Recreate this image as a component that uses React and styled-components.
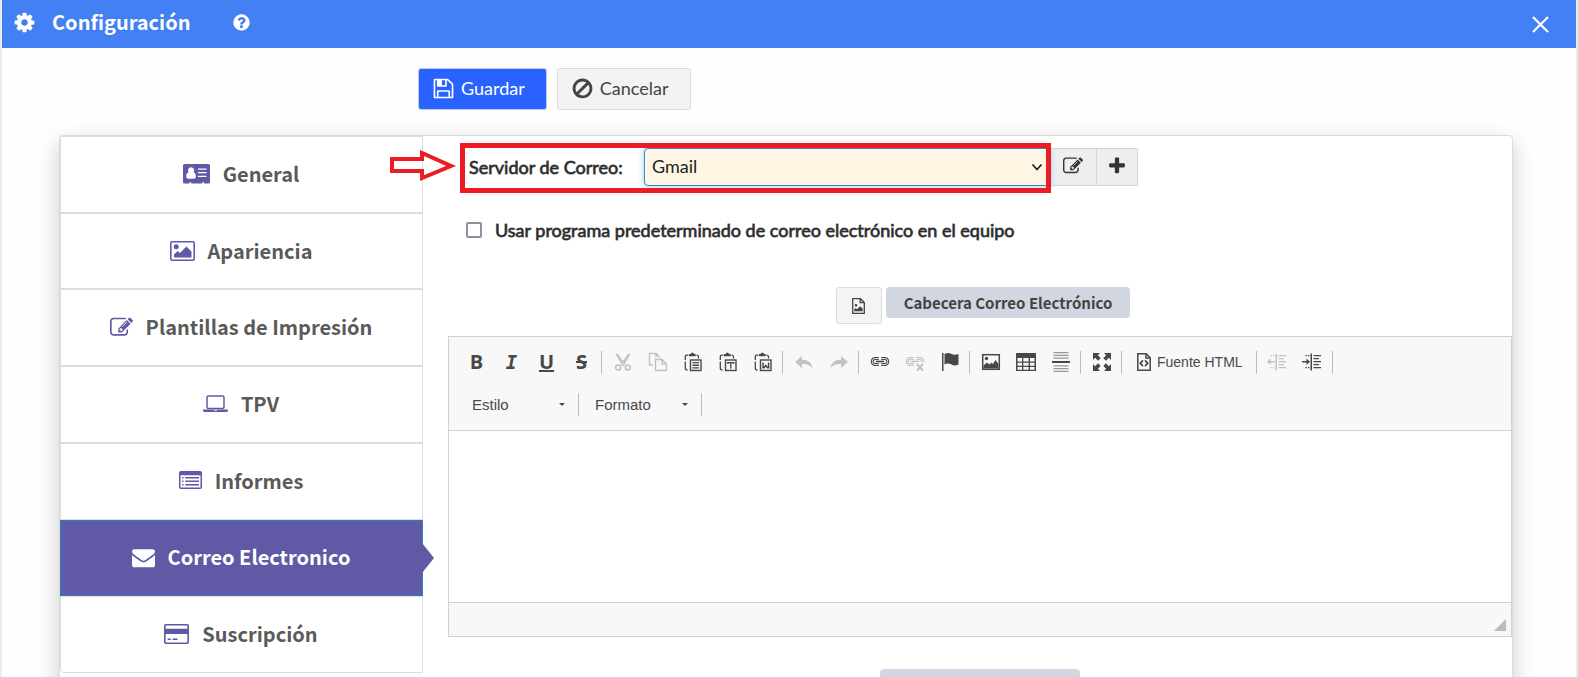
import React from "react";
import styled, { createGlobalStyle, css } from "styled-components";

const heading = `"Noto Sans CJK SC", "Open Sans", sans-serif`;
const body = `Lato, "Liberation Sans", sans-serif`;

const GlobalStyle = createGlobalStyle`
  *, *::before, *::after { box-sizing: border-box; }
  body { margin: 0; background: #e9edf2; font-family: ${body}; color: #2b2b2b; }
  button, select, input { font-family: inherit; margin: 0; }
`;

const Window = styled.div`
  height: 100vh;
  overflow: hidden;
  margin: 0 2px;
  background: #fefefe;
`;

const Header = styled.header`
  display: flex;
  align-items: center;
  height: 48px;
  padding: 0 27px 3px 11px;
  background: #4280f3;
  color: #fff;
`;

const Title = styled.h1`
  margin: 0 41px 0 16px;
  padding-bottom: 2px;
  font: 700 20px/28px ${heading};
`;

const HeaderButton = styled.button`
  display: flex;
  padding: 0;
  border: 0;
  background: none;
  color: inherit;
  margin-left: ${(p) => (p.$end ? "auto" : "0")};
  padding-top: ${(p) => (p.$end ? "3px" : "0")};
`;

const Actions = styled.div`
  display: flex;
  gap: 10px;
  padding: 20px 0 25px 416px;
`;

const ActionButton = styled.button`
  display: flex;
  align-items: center;
  gap: 6px;
  height: 42px;
  padding: 0 22px 2px 13px;
  border: 1px solid #dcdcdc;
  border-radius: 3px;
  background: #f3f3f3;
  color: #444;
  font-size: 18px;
  ${(p) => p.$primary && css`
    padding-right: 21px;
    border-color: #b9cdf5;
    background: #2962ff;
    color: #fff;
  `}
`;

const Panel = styled.div`
  position: relative;
  display: flex;
  align-items: flex-start;
  min-height: 700px;
  margin: 0 63px 0 57px;
  border: 1px solid #dcdcdc;
  border-radius: 4px;
  background: #fff;
  box-shadow: 0 8px 22px rgba(0, 0, 0, 0.2);
`;

const Sidebar = styled.nav`
  display: grid;
  grid-auto-rows: 1fr;
  flex: 0 0 363px;
  min-height: 537px;
`;

const SideLink = styled.a`
  position: relative;
  display: flex;
  align-items: center;
  justify-content: center;
  gap: 13px;
  padding: 0 1px 1px 0;
  border: 1px solid #dcdcdc;
  color: #5a5a5a;
  font: 700 20px/28px ${heading};
  text-decoration: none;
  svg { color: #5f59a6; }
  &:last-child { border-bottom-left-radius: 4px; }
  ${(p) => p.$active && css`
    border-color: #337ab7;
    background: #5f59a6;
    color: #fff;
    svg { color: #fff; }
    &::after {
      content: "";
      position: absolute;
      left: 100%;
      top: 50%;
      margin-top: -15px;
      border: 15px solid transparent;
      border-left: 12px solid #5f59a6;
      border-right: 0;
    }
  `}
`;

const Content = styled.main`
  flex: 1;
  min-width: 0;
  padding: 12px 0 0 25px;
`;

const ServerRow = styled.div`
  display: flex;
  align-items: center;
  max-width: 690px;
  height: 38px;
  padding-left: 21px;
`;

const Label = styled.label`
  font-size: 18px;
  font-weight: 400;
  line-height: 24px;
  -webkit-text-stroke: 1px rgba(43, 43, 43, 0.7);
`;

const ServerLabel = styled(Label)`
  flex: 0 0 175px;
`;

const SelectWrap = styled.div`
  position: relative;
  flex: 1;
  svg { position: absolute; right: 7px; top: 15px; pointer-events: none; }
`;

const Select = styled.select`
  display: block;
  appearance: none;
  width: 100%;
  height: 38px;
  padding: 0 7px 2px;
  border: 1px solid #3c8dbc;
  border-radius: 4px;
  background: #fef6e2;
  color: #222;
  font-size: 18px;
  box-shadow: 0 0 6px rgba(60, 170, 240, 0.6);
`;

const AddonButton = styled.button`
  display: flex;
  align-items: center;
  justify-content: center;
  width: ${(p) => p.$width}px;
  height: 38px;
  margin-left: -1px;
  padding: 0 0 2px;
  border: 1px solid #d2d6de;
  background: #eee;
  color: #333;
`;

const Highlight = styled.div`
  position: absolute;
  left: 400px;
  top: 7px;
  width: 591px;
  height: 50px;
  border: 5px solid #ed1c24;
  pointer-events: none;
`;

const Pointer = styled.svg`
  position: absolute;
  left: 330px;
  top: 14px;
  pointer-events: none;
`;

const CheckRow = styled.div`
  display: flex;
  align-items: center;
  gap: 13px;
  padding: 32px 0 0 18px;
`;

const Checkbox = styled.input`
  appearance: none;
  width: 16px;
  height: 16px;
  border: 2px solid #8f8f9d;
  border-radius: 2px;
  background: #fff;
`;

const SectionHead = styled.div`
  display: flex;
  align-items: flex-start;
  justify-content: center;
  gap: 4px;
  padding: ${(p) => p.$padding};
`;

const FileButton = styled.button`
  display: flex;
  align-items: center;
  justify-content: center;
  width: 46px;
  height: 37px;
  padding: 0;
  border: 1px solid #dcdcdc;
  border-radius: 3px;
  background: #f4f4f4;
  color: #444;
`;

const Badge = styled.h2`
  margin: 0;
  padding: 0 18px;
  border-radius: 4px;
  background: #d2d6e0;
  color: #444;
  font: 700 15px/31px ${heading};
`;

const Editor = styled.section`
  border: 1px solid #d1d1d1;
  font-family: "Liberation Sans", Arial, sans-serif;
`;

const Toolbar = styled.div`
  padding: 4px 0 5px 10px;
  border-bottom: 1px solid #d1d1d1;
  background: #f8f8f8;
`;

const ToolRow = styled.div`
  display: flex;
  align-items: center;
  height: 42px;
`;

const Tool = styled.button`
  display: flex;
  align-items: center;
  justify-content: center;
  gap: 5px;
  min-width: 35px;
  height: 34px;
  padding: 0 ${(p) => (p.$wide ? 11 : 7)}px;
  border: 0;
  background: none;
  color: #484848;
  font-size: 14px;
  opacity: ${(p) => (p.disabled ? 0.3 : 1)};
`;

const Letter = styled.span`
  font: ${(p) => (p.$italic ? "italic" : "normal")} 700 ${(p) => (p.$italic ? '19px/24px "DejaVu Sans Mono", monospace' : '20px/24px "Open Sans", sans-serif')};
  text-decoration: ${(p) => p.$line || "none"};
`;

const Separator = styled.span`
  width: 1px;
  height: 23px;
  margin: 0 3px 0 2px;
  background: #bcbcbc;
`;

const Combo = styled.button`
  display: flex;
  align-items: center;
  justify-content: space-between;
  width: 117px;
  height: 34px;
  padding: 0 11px 0 13px;
  border: 0;
  background: none;
  color: #484848;
  font-size: 15px;
  &::after {
    content: "";
    border: 3px solid transparent;
    border-top-color: #484848;
    border-bottom: 0;
  }
`;

const Writing = styled.div`
  height: 171px;
  background: #fff;
  outline: 0;
`;

const StatusBar = styled.div`
  display: flex;
  justify-content: flex-end;
  align-items: flex-end;
  height: 34px;
  padding: 5px;
  border-top: 1px solid #d1d1d1;
  background: #f8f8f8;
  color: #bcbcbc;
`;

/* Icons on the 1792 unit grid */
const AWESOME = {
  cog: "M1152 896q0-106-75-181t-181-75-181 75-75 181 75 181 181 75 181-75 75-181zm512-109v222q0 12-8 23t-20 13l-185 28q-19 54-39 91 35 50 107 138 10 12 10 25t-9 23q-27 37-99 108t-94 71q-12 0-26-9l-138-108q-44 23-91 38-16 136-29 186-7 28-36 28h-222q-14 0-24.5-8.5t-11.5-21.5l-28-184q-49-16-90-37l-141 107q-10 9-25 9-14 0-25-11-126-114-165-168-7-10-7-23 0-12 8-23 15-21 51-66.5t54-70.5q-27-50-41-99l-183-27q-13-2-21-12.5t-8-23.5v-222q0-12 8-23t19-13l186-28q14-46 39-92-40-57-107-138-10-12-10-24 0-10 9-23 26-36 98.5-107.5t94.5-71.5q13 0 26 10l138 107q44-23 91-38 16-136 29-186 7-28 36-28h222q14 0 24.5 8.5t11.5 21.5l28 184q49 16 90 37l142-107q9-9 24-9 13 0 25 10 129 119 165 170 7 8 7 22 0 12-8 23-15 21-51 66.5t-54 70.5q26 50 41 98l183 28q13 2 21 12.5t8 23.5z",
  question: "M1024 1376v-192q0-14-9-23t-23-9h-192q-14 0-23 9t-9 23v192q0 14 9 23t23 9h192q14 0 23-9t9-23zm256-672q0-88-55.5-163t-138.5-116-170-41q-243 0-371 213-15 24 8 42l132 100q7 6 19 6 16 0 25-12 53-68 86-92 34-24 86-24 48 0 85.5 26t37.5 59q0 38-20 61t-68 45q-63 28-115.5 86.5t-52.5 125.5v36q0 14 9 23t23 9h192q14 0 23-9t9-23q0-19 21.5-49.5t54.5-49.5q32-18 49-28.5t46-35 44.5-48 28-60.5 12.5-81zm384 192q0 209-103 385.5t-279.5 279.5-385.5 103-385.5-103-279.5-279.5-103-385.5 103-385.5 279.5-279.5 385.5-103 385.5 103 279.5 279.5 103 385.5z",
  save: "M512 1536h768v-384h-768v384zm896 0h128v-896q0-14-10-38.5t-20-34.5l-281-281q-10-10-34-20t-39-10v416q0 40-28 68t-68 28h-576q-40 0-68-28t-28-68v-416h-128v1280h128v-416q0-40 28-68t68-28h832q40 0 68 28t28 68v416zm-384-928v-320q0-13-9.5-22.5t-22.5-9.5h-192q-13 0-22.5 9.5t-9.5 22.5v320q0 13 9.5 22.5t22.5 9.5h192q13 0 22.5-9.5t9.5-22.5zm640 32v928q0 40-28 68t-68 28h-1344q-40 0-68-28t-28-68v-1344q0-40 28-68t68-28h928q40 0 88 20t76 48l280 280q28 28 48 76t20 88z",
  ban: "M1440 893q0-161-87-295l-754 753q137 89 297 89 111 0 211.5-43.5t173.5-116.5 116-174.5 43-212.5zm-999 299l755-754q-135-91-300-91-148 0-273 73t-198 199-73 274q0 162 89 299zm1223-299q0 157-61 300t-163.5 246-245 164-298.5 61-298.5-61-245-164-163.5-246-61-300 61-299.5 163.5-245.5 245-164 298.5-61 298.5 61 245 164 163.5 245.5 61 299.5z",
  edit: "M888 1184l116-116-152-152-116 116v56h96v96h56zm440-720q-16-16-33 1l-350 350q-17 17-1 33t33-1l350-350q17-17 1-33zm80 594v190q0 119-84.5 203.5t-203.5 84.5h-832q-119 0-203.5-84.5t-84.5-203.5v-832q0-119 84.5-203.5t203.5-84.5h832q63 0 117 25 15 7 18 23 3 17-9 29l-49 49q-14 14-32 8-23-6-45-6h-832q-66 0-113 47t-47 113v832q0 66 47 113t113 47h832q66 0 113-47t47-113v-126q0-13 9-22l64-64q15-15 35-7t20 29zm-96-738l288 288-672 672h-288v-288zm444 132l-92 92-288-288 92-92q28-28 68-28t68 28l152 152q28 28 28 68t-28 68z",
  plus: "M1600 736v192q0 40-28 68t-68 28h-416v416q0 40-28 68t-68 28h-192q-40 0-68-28t-28-68v-416h-416q-40 0-68-28t-28-68v-192q0-40 28-68t68-28h416v-416q0-40 28-68t68-28h192q40 0 68 28t28 68v416h416q40 0 68 28t28 68z",
  envelope: "M1792 710v794q0 66-47 113t-113 47h-1472q-66 0-113-47t-47-113v-794q44 49 101 87 362 246 497 345 57 42 92.5 65.5t94.5 48 110 24.5h2q51 0 110-24.5t94.5-48 92.5-65.5q170-123 498-345 57-39 100-87zm0-294q0 79-49 151t-122 123q-376 261-468 325-10 7-42.5 31t-54 38.5-52 32.5-57.5 27-50 9h-2q-23 0-50-9t-57.5-27-52-32.5-54-38.5-42.5-31q-91-64-262-182.5t-205-142.5q-62-42-117-115.5t-55-136.5q0-78 41.5-130t118.5-52h1472q65 0 112.5 47t47.5 113z",
};

const Awesome = ({ name, size }) => (
  <svg width={size} height={size} viewBox="0 0 1792 1792" fill="currentColor" aria-hidden="true">
    <path d={AWESOME[name]} />
  </svg>
);

const Draw = ({ w = 20, h = 20, children }) => (
  <svg width={w} height={h} viewBox={`0 0 ${w} ${h}`} fill="currentColor" aria-hidden="true">{children}</svg>
);

const CardIcon = () => (
  <Draw w={27} h={20}>
    <path fillRule="evenodd" d="M1.500 0h24a1.500 1.500 0 0 1 1.500 1.500v16.500a1.500 1.500 0 0 1-1.500 1.500H21v-1.200h-1.700v1.200H8.200v-1.200H6.500v1.200h-5A1.500 1.500 0 0 1 0 18V1.500A1.500 1.500 0 0 1 1.500 0zM15 4.500v1.300h8.500V4.500zM15 8v1.300h8.500V8zM15 11.700V13h8.500v-1.300zM8 3.200a3.100 3.100 0 0 0-2.400 5C3.900 8.700 3.200 10.500 3.200 12.500c0 1.300.8 2.200 2 2.200h5.700c1.200 0 2-.9 2-2.200 0-2-.7-3.800-2.400-4.300A3.100 3.100 0 0 0 8 3.200z" />
  </Draw>
);
const ImageIcon = () => (
  <Draw w={25} h={20}>
    <rect x="0.800" y="0.800" width="23.400" height="18.400" rx="1.500" fill="none" stroke="currentColor" strokeWidth="1.600" />
    <circle cx="6.200" cy="5.800" r="2.500" />
    <path d="M4 16.500v-3l3.700-3.500 2.200 2.100L16.500 5.500l5 5v6z" />
  </Draw>
);
const LaptopIcon = () => (
  <Draw w={25} h={18}>
    <rect x="4" y="0.900" width="17" height="12.600" rx="1.500" fill="none" stroke="currentColor" strokeWidth="1.500" />
    <path d="M0 14.400h25v1q0 1.600-2 1.600H2q-2 0-2-1.600zM11 15.100v.7h3v-.7z" fillRule="evenodd" />
  </Draw>
);
const ListIcon = () => (
  <Draw w={23} h={19}>
    <path fillRule="evenodd" d="M1.800 0h19.400Q23 0 23 1.800v14.400q0 1.800-1.800 1.800H1.800Q0 18 0 16.200V1.800Q0 0 1.800 0zM1.500 4.300v11.600q0 .6.600.6h18.800q.6 0 .6-.6V4.300z" />
    <path d="M3 6h1.500v1.500H3zM6.300 6H20v1.500H6.300zM3 9.500h1.500V11H3zM6.300 9.500H20V11H6.300zM3 13h1.500v1.500H3zM6.300 13H20v1.500H6.300z" />
  </Draw>
);
const CreditIcon = () => (
  <Draw w={25} h={20}>
    <path fillRule="evenodd" d="M1.800 0h21.400Q25 0 25 1.800v16.400q0 1.800-1.800 1.800H1.800Q0 20 0 18.200V1.800Q0 0 1.800 0zM2.200 1.600q-.6 0-.6.600v2.600h21.800V2.200q0-.6-.6-.6zM1.600 10v7.800q0 .6.600.6h20.600q.6 0 .6-.6V10z" />
    <path d="M3.700 14.500h3v1.400h-3zM8.500 14.500h5v1.400h-5z" />
  </Draw>
);
const CloseIcon = () => (
  <Draw w={17} h={17}><path d="M1 1l15 15M16 1L1 16" stroke="currentColor" strokeWidth="2.200" /></Draw>
);
const FileImageIcon = () => (
  <Draw w={13} h={16}>
    <path d="M.7.700h7.800l3.800 3.800v10.800H.7zM8.200.700v4h4" fill="none" stroke="currentColor" strokeWidth="1.300" />
    <circle cx="4" cy="7.300" r="1.300" />
    <path d="M2.200 13.300v-1.800l1.500-1.500 1.300 1.200L8.200 8.200l2.500 2.500v2.600z" />
  </Draw>
);

/* Editor toolbar icons */
const Clip = ({ children }) => (
  <Draw>
    <path d="M5 3.200H3.800Q2.300 3.200 2.300 4.700V8M2.300 9.500v6.500Q2.300 18 4.500 18M13.500 3.200q2 0 2 1.500V6.500" fill="none" stroke="currentColor" strokeWidth="1.300" />
    <path d="M5.800 2h1.900q.3-1.500 1.600-1.500T11 2h1.700v2.300H5.800z" />
    <rect x="7.500" y="8" width="10.500" height="10.500" fill="none" stroke="currentColor" strokeWidth="1.400" />
    {children}
  </Draw>
);
const Chain = () => (
  <>
    <path d="M8.800 6.500H5.200a3 3 0 0 0 0 6h3.600M11.200 6.500h3.600a3 3 0 0 1 0 6h-3.600" fill="none" stroke="currentColor" strokeWidth="3" />
    <path d="M8.800 6.500H5.200a3 3 0 0 0 0 6h3.600M11.200 6.500h3.600a3 3 0 0 1 0 6h-3.600" fill="none" stroke="#f8f8f8" strokeWidth="0.900" />
    <path d="M6 8.700h8v1.600H6z" />
  </>
);
const I = {
  cut: (
    <Draw>
      <path d="M3 2l2 .5 6.500 9.500-1.500 2zM17 2l-2 .5L8.500 12l1.500 2z" stroke="currentColor" />
      <g fill="none" stroke="currentColor" strokeWidth="1.700"><circle cx="5.200" cy="15.500" r="2.500" /><circle cx="14.800" cy="15.500" r="2.500" /></g>
    </Draw>
  ),
  copy: (
    <Draw>
      <path d="M5 13H1.500V1.500H8L12 5.500M7.500 7.500H14l4.500 4.500v6.500h-11zM14 7.500V12h4.500M8 1.500v4" fill="none" stroke="currentColor" strokeWidth="1.400" />
    </Draw>
  ),
  paste: <Clip><path d="M9.500 10h6.500v1.300H9.500zM9.500 12.600h6.500v1.300H9.500zM9.500 15.200h6.500v1.300H9.500z" /></Clip>,
  pasteText: <Clip><path d="M9.800 12v-1.300h6V12M12.800 10.700v6" stroke="currentColor" strokeWidth="1.300" fill="none" /></Clip>,
  pasteWord: <Clip><path d="M10 10.500v5.300h1l1.800-2.300 1.800 2.300h1v-5.300" stroke="currentColor" strokeWidth="1.500" fill="none" /></Clip>,
  undo: <Draw><path d="M1 10l7-6v3.700c6 0 10 3 10.500 8.500-2.500-3.500-5.500-4.300-10.500-4.300V16z" /></Draw>,
  redo: <Draw><path d="M19 10l-7-6v3.700c-6 0-10 3-10.500 8.500 2.500-3.500 5.500-4.300 10.500-4.300V16z" /></Draw>,
  link: <Draw><Chain /></Draw>,
  unlink: <Draw><Chain /><path d="M11 10.300h9V20h-9z" fill="#f8f8f8" /><path d="M12 12l6 6.500M18 12l-6 6.500" stroke="currentColor" strokeWidth="2" /></Draw>,
  flag: <Draw><path d="M2 1h1.500v18H2zM4.500 2q3.500-2 7 0 3 1.500 7 0v10.500q-4 1.800-7 0-3.500-1.800-7 0z" /></Draw>,
  image: (
    <Draw>
      <rect x="1.700" y="2.700" width="16.600" height="14.600" fill="none" stroke="currentColor" strokeWidth="1.500" />
      <circle cx="5.500" cy="6.500" r="1.700" />
      <path d="M2.500 16.500v-3L6 10.500l2.500 2 2-2L12 12l2.500-4 3 4v4.500z" />
    </Draw>
  ),
  table: (
    <Draw>
      <path fillRule="evenodd" d="M0 1h20v18H0zM1.500 6v3.500H6V6zM7.300 6v3.500h5.300V6zM14 6v3.500h4.500V6zM1.500 10.700v3H6v-3zM7.300 10.700v3h5.300v-3zM14 10.700v3h4.500v-3zM1.500 15v2.700H6V15zM7.300 15v2.700h5.300V15zM14 15v2.700h4.500V15z" />
    </Draw>
  ),
  rule: (
    <Draw>
      <path opacity=".55" d="M2.500 0h15v1.300h-15zM2.500 2.700h15V4h-15zM2.500 5.400h15v1.300h-15zM2.500 13.300h15v1.300h-15zM2.500 16h15v1.300h-15zM2.500 18.700h15V20h-15z" />
      <path d="M1 9h18v2H1z" />
    </Draw>
  ),
  maximize: (
    <Draw>
      <path d="M1 1h7L5.800 3.200l2.900 2.900-2.600 2.600-2.900-2.900L1 8zM19 1v7l-2.200-2.200-2.900 2.900-2.600-2.600 2.900-2.900L12 1zM1 19v-7l2.200 2.200 2.900-2.900 2.600 2.600-2.900 2.900L8 19zM19 19h-7l2.200-2.200-2.900-2.900 2.600-2.600 2.900 2.900L19 12z" />
    </Draw>
  ),
  source: (
    <Draw w={16}>
      <path d="M1.800 1.800h8.400l4 4v12.400H1.800zM10 2v4h4" fill="none" stroke="currentColor" strokeWidth="1.500" />
      <path d="M7 8.300L4.300 11.200 7 14.100M9 8.300l2.700 2.900L9 14.100" fill="none" stroke="currentColor" strokeWidth="1.700" />
    </Draw>
  ),
  outdent: (
    <Draw>
      <path d="M8.500 1.500H10v17H8.500zM11.500 3h7.500v1.300h-7.500zM11.500 6H17v1.300h-5.500zM11.500 9h7.500v1.300h-7.500zM11.500 12H17v1.300h-5.500zM11.500 15h7.500v1.300h-7.500zM3.500 3H5v1.300H3.500zM6 3h1.500v1.300H6zM3.500 15H5v1.300H3.500zM6 15h1.500v1.300H6zM0 9.700L3.500 6.500V9H8v1.400H3.500v2.500z" />
    </Draw>
  ),
  indent: (
    <Draw>
      <path d="M8.500 1.500H10v17H8.500zM11.500 3h7.500v1.300h-7.500zM11.500 6H17v1.300h-5.500zM11.500 9h7.500v1.300h-7.500zM11.500 12H17v1.300h-5.500zM11.500 15h7.500v1.300h-7.500zM3.500 3H5v1.300H3.500zM6 3h1.500v1.300H6zM3.500 15H5v1.300H3.500zM6 15h1.500v1.300H6zM8 9.700L4.500 6.500V9H0v1.400h4.500v2.500z" />
    </Draw>
  ),
};

const SECTIONS = [
  { text: "General", icon: <CardIcon /> },
  { text: "Apariencia", icon: <ImageIcon /> },
  { text: "Plantillas de Impresión", icon: <Awesome name="edit" size={23} /> },
  { text: "TPV", icon: <LaptopIcon /> },
  { text: "Informes", icon: <ListIcon /> },
  { text: "Correo Electronico", icon: <Awesome name="envelope" size={23} />, active: true },
  { text: "Suscripción", icon: <CreditIcon /> },
];

const TOOL_GROUPS = [
  [
    { label: "Negrita", icon: <Letter>B</Letter> },
    { label: "Cursiva", icon: <Letter $italic>I</Letter> },
    { label: "Subrayado", icon: <Letter $line="underline">U</Letter> },
    { label: "Tachado", icon: <Letter $line="line-through">S</Letter> },
  ],
  [
    { label: "Cortar", icon: I.cut, disabled: true },
    { label: "Copiar", icon: I.copy, disabled: true },
    { label: "Pegar", icon: I.paste },
    { label: "Pegar como texto", icon: I.pasteText },
    { label: "Pegar desde Word", icon: I.pasteWord },
  ],
  [
    { label: "Deshacer", icon: I.undo, disabled: true },
    { label: "Rehacer", icon: I.redo, disabled: true },
  ],
  [
    { label: "Insertar vínculo", icon: I.link },
    { label: "Eliminar vínculo", icon: I.unlink, disabled: true },
    { label: "Ancla", icon: I.flag },
  ],
  [
    { label: "Imagen", icon: I.image },
    { label: "Tabla", icon: I.table },
    { label: "Línea horizontal", icon: I.rule },
  ],
  [{ label: "Maximizar", icon: I.maximize }],
  [{ label: "Fuente HTML", icon: I.source, text: "Fuente HTML" }],
  [
    { label: "Disminuir sangría", icon: I.outdent, disabled: true },
    { label: "Aumentar sangría", icon: I.indent },
  ],
];

export default function App() {
  return (
    <>
      <GlobalStyle />
      <Window>
        <Header>
          <Awesome name="cog" size={23} />
          <Title>Configuración</Title>
          <HeaderButton aria-label="Ayuda"><Awesome name="question" size={19} /></HeaderButton>
          <HeaderButton $end aria-label="Cerrar"><CloseIcon /></HeaderButton>
        </Header>
        <Actions>
          <ActionButton $primary><Awesome name="save" size={23} />Guardar</ActionButton>
          <ActionButton><Awesome name="ban" size={23} />Cancelar</ActionButton>
        </Actions>
        <Panel>
          <Sidebar>
            {SECTIONS.map((s) => (
              <SideLink key={s.text} href="#" $active={s.active}>{s.icon}{s.text}</SideLink>
            ))}
          </Sidebar>
          <Content>
            <ServerRow>
              <ServerLabel htmlFor="server">Servidor de Correo:</ServerLabel>
              <SelectWrap>
                <Select id="server" defaultValue="Gmail"><option>Gmail</option></Select>
                <Draw w={12} h={9}><path d="M1.500 1.500L6 6.500l4.500-5" fill="none" stroke="#222" strokeWidth="1.800" /></Draw>
              </SelectWrap>
              <AddonButton $width={48} aria-label="Editar"><Awesome name="edit" size={20} /></AddonButton>
              <AddonButton $width={42} aria-label="Añadir"><Awesome name="plus" size={20} /></AddonButton>
            </ServerRow>
            <CheckRow>
              <Checkbox type="checkbox" id="default-program" />
              <Label htmlFor="default-program">Usar programa predeterminado de correo electrónico en el equipo</Label>
            </CheckRow>
            <SectionHead $padding="45px 0 12px 6px">
              <FileButton aria-label="Elegir imagen"><FileImageIcon /></FileButton>
              <Badge>Cabecera Correo Electrónico</Badge>
            </SectionHead>
            <Editor>
              <Toolbar>
                <ToolRow>
                  {TOOL_GROUPS.map((group, i) => (
                    <React.Fragment key={i}>
                      {group.map((t) => (
                        <Tool key={t.label} aria-label={t.label} disabled={t.disabled} $wide={!!t.text}>{t.icon}{t.text}</Tool>
                      ))}
                      <Separator />
                    </React.Fragment>
                  ))}
                </ToolRow>
                <ToolRow>
                  <Combo>Estilo</Combo>
                  <Separator />
                  <Combo>Formato</Combo>
                  <Separator />
                </ToolRow>
              </Toolbar>
              <Writing contentEditable role="textbox" aria-label="Cabecera" />
              <StatusBar><Draw w={12} h={12}><path d="M12 0v12H0z" /></Draw></StatusBar>
            </Editor>
            <SectionHead $padding="32px 0 12px"><Badge>Pie Correo Electrónico</Badge></SectionHead>
          </Content>
          <Highlight />
          <Pointer width="66" height="32" viewBox="0 0 66 32" aria-hidden="true">
            <path d="M2 9h30V3l29 13-29 12v-7H2z" fill="none" stroke="#ed1c24" strokeWidth="4" />
          </Pointer>
        </Panel>
      </Window>
    </>
  );
}
